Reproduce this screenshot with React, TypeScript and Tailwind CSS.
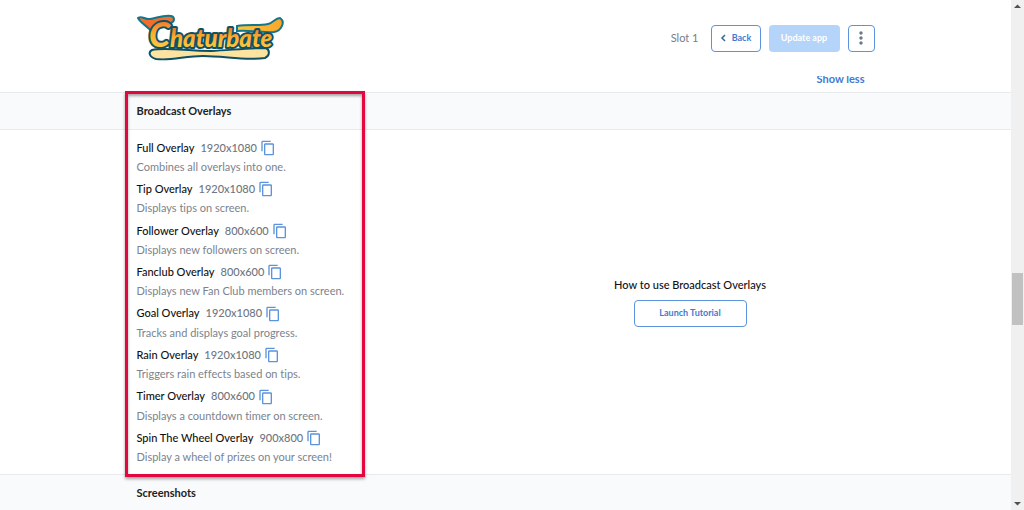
import { MdContentCopy, MdMoreVert } from "react-icons/md";

type Overlay = {
  name: string;
  size: string;
  description: string;
};

const overlays: Overlay[] = [
  { name: "Full Overlay", size: "1920x1080", description: "Combines all overlays into one." },
  { name: "Tip Overlay", size: "1920x1080", description: "Displays tips on screen." },
  { name: "Follower Overlay", size: "800x600", description: "Displays new followers on screen." },
  { name: "Fanclub Overlay", size: "800x600", description: "Displays new Fan Club members on screen." },
  { name: "Goal Overlay", size: "1920x1080", description: "Tracks and displays goal progress." },
  { name: "Rain Overlay", size: "1920x1080", description: "Triggers rain effects based on tips." },
  { name: "Timer Overlay", size: "800x600", description: "Displays a countdown timer on screen." },
  { name: "Spin The Wheel Overlay", size: "900x800", description: "Display a wheel of prizes on your screen!" },
];

function Logo() {
  return (
    <svg width="148" height="48" viewBox="0 0 148 48" role="img" aria-label="Chaturbate">
      <defs>
        <linearGradient id="letters" x1="0" y1="0" x2="0" y2="1">
          <stop offset="0.15" stopColor="#f2732a" />
          <stop offset="0.5" stopColor="#fbb02d" />
          <stop offset="1" stopColor="#fcd34a" />
        </linearGradient>
        <linearGradient id="tail" x1="0" y1="0" x2="1" y2="0">
          <stop offset="0" stopColor="#fcc63a" />
          <stop offset="1" stopColor="#f9a62b" />
        </linearGradient>
      </defs>
      {/* underline swash */}
      <path
        d="M15 36 C28 33 50 37 74 37 C94 36 112 34 129 34 C133 36 133 42 128 44 C108 47 88 42 66 42 C48 42 34 47 19 45 C12 43 11 38 15 36 Z"
        fill="#fde3a0"
        stroke="#0d4f63"
        strokeWidth="2"
      />
      {/* flag of the C */}
      <path
        d="M1 4 C5 1 8 6 13 5 C20 4 26 1 34 2 C38 3 38 7 34 9 C26 9 20 13 15 18 C11 12 4 10 1 4 Z"
        fill="#f26f2b"
        stroke="#12768c"
        strokeWidth="2"
      />
      {/* crossbar of the t, running off to the right */}
      <path
        d="M100 12 C112 10 122 12 131 10 C136 9 138 4 143 4 C149 8 144 17 137 18 C128 19 114 16 100 17 Z"
        fill="url(#tail)"
        stroke="#12768c"
        strokeWidth="2"
      />
      <g
        fontFamily="'Liberation Sans Narrow', Lato, sans-serif"
        fontWeight="900"
        fontStyle="italic"
        fill="url(#letters)"
        stroke="#0d5368"
        strokeWidth="4"
        strokeLinejoin="round"
        paintOrder="stroke"
      >
        <text x="12" y="33" fontSize="34">C</text>
        <text x="33" y="33" fontSize="24">haturbate</text>
      </g>
    </svg>
  );
}

function CopyButton({ label }: { label: string }) {
  return (
    <button type="button" aria-label={label} className="text-[#5b93dc] hover:text-[#2f6fc4]">
      <MdContentCopy size={16} />
    </button>
  );
}

function SectionTitle({ children }: { children: string }) {
  return (
    <div className="border-y border-[#e8eaed] bg-[#f9fafc]">
      <h2 className="mx-auto h-9 max-w-[738px] text-[11px] font-bold leading-9 text-[#222]">
        {children}
      </h2>
    </div>
  );
}

function ScrollRail() {
  return (
    <div className="flex w-[13px] shrink-0 flex-col items-center bg-[#f0f0f0] py-1">
      <svg width="7" height="5" viewBox="0 0 7 5">
        <path d="M0 4 L3.5 0.5 L7 4 Z" fill="#505050" />
      </svg>
      <div className="flex-3" />
      <div className="h-[52px] w-[11px] bg-[#c1c1c1]" />
      <div className="flex-2" />
      <svg width="7" height="5" viewBox="0 0 7 5">
        <path d="M0 1 L3.5 4.5 L7 1 Z" fill="#505050" />
      </svg>
    </div>
  );
}

function App() {
  return (
    <div className="flex h-screen overflow-hidden bg-white font-[Lato,sans-serif] text-[11px] [font-variant-ligatures:none]">
      <main className="min-w-0 flex-1">
        <header className="mx-auto flex h-[76px] max-w-[738px] items-center justify-between">
          <Logo />
          <div className="flex items-center gap-2 text-[9px] font-bold">
            <span className="mr-1 text-[11px] font-normal text-[#757d87]">Slot 1</span>
            <button
              type="button"
              className="flex h-[27px] w-[50px] items-center justify-center gap-1 rounded border border-[#5b93dc] text-[#3f7bd1]"
            >
              <svg width="8" height="8" viewBox="0 0 8 8" fill="none" stroke="#356797" strokeWidth="1.5">
                <path d="M5 1 L2 4 L5 7" />
              </svg>
              Back
            </button>
            <button type="button" disabled className="h-[27px] w-[71px] rounded bg-[#b4d5f9] text-white">
              Update app
            </button>
            <button
              type="button"
              aria-label="More options"
              className="flex h-[27px] w-[27px] items-center justify-center rounded border border-[#5b93dc] text-[#6f7883]"
            >
              <MdMoreVert size={20} />
            </button>
          </div>
        </header>

        <div className="mx-auto flex h-4 max-w-[738px] items-start justify-end overflow-hidden pr-[10px]">
          <a href="#" className="-mt-[5px] font-bold leading-4 text-[#3f7bd1]">
            Show less
          </a>
        </div>

        <section className="relative">
          <SectionTitle>Broadcast Overlays</SectionTitle>
          <div className="mx-auto grid h-[344px] max-w-[738px] grid-cols-2">
            <ul className="flex flex-col justify-between py-2">
              {overlays.map((overlay) => (
                <li key={overlay.name}>
                  <div className="flex h-5 items-center font-medium">
                    <span className="mr-[6px] text-[#111]">{overlay.name}</span>
                    <span className="mr-[3px] text-[#6f7781]">{overlay.size}</span>
                    <CopyButton label={`Copy ${overlay.name} link`} />
                  </div>
                  <p className="leading-[18px] text-[#7b838d]">{overlay.description}</p>
                </li>
              ))}
            </ul>
            <div className="flex flex-col items-center justify-center gap-[5px] pb-[3px]">
              <p className="font-medium leading-5 text-[#111]">How to use Broadcast Overlays</p>
              <button
                type="button"
                className="h-[27px] w-[113px] rounded border border-[#5b93dc] text-[9px] font-bold text-[#3f7bd1]"
              >
                Launch Tutorial
              </button>
            </div>
          </div>

          {/* highlight around the overlay list */}
          <div className="pointer-events-none absolute inset-x-0 -top-px -bottom-[3px] mx-auto max-w-[762px]">
            <div className="h-full w-[240px] border-3 border-[#e3063f] shadow-[0_2px_3px_rgba(0,0,0,0.35),inset_0_2px_3px_rgba(0,0,0,0.35)]" />
          </div>
        </section>

        <SectionTitle>Screenshots</SectionTitle>
      </main>
      <ScrollRail />
    </div>
  );
}

export default App;
